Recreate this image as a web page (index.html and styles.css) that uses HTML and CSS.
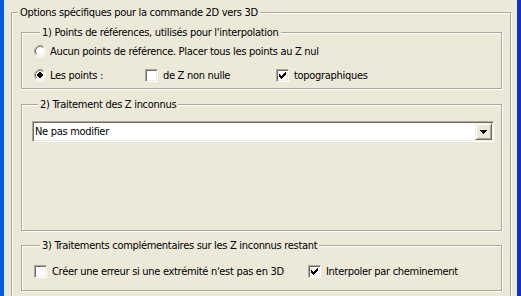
FILE: index.html
```html
<!DOCTYPE html>
<html lang="fr">
  <head>
    <meta charset="UTF-8" />
    <title>Options 2D vers 3D</title>
    <link rel="stylesheet" href="styles.css">
  </head>
  <body>
    <div class="window">
      <fieldset class="group outer">
        <legend>Options spécifiques pour la commande 2D vers 3D</legend>
        <div class="outer-body">

          <!-- 1) reference points -->
          <fieldset class="group refs">
            <legend>1) Points de références, utilisés pour l'interpolation</legend>
            <div class="row">
              <label class="opt">
                <svg class="radio" width="12" height="12" viewBox="0 0 12 12">
                  <circle cx="6" cy="6" r="5" fill="#fff" />
                  <path d="M2.11 9.89 A5.5 5.5 0 0 1 9.89 2.11" stroke="#aca899" fill="none" />
                  <path d="M9.89 2.11 A5.5 5.5 0 0 1 2.11 9.89" stroke="#fff" fill="none" />
                  <path d="M2.82 9.18 A4.5 4.5 0 0 1 9.18 2.82" stroke="#716f64" fill="none" />
                  <path d="M9.18 2.82 A4.5 4.5 0 0 1 2.82 9.18" stroke="#f1efe2" fill="none" />
                </svg>
                Aucun points de référence. Placer tous les points au Z nul
              </label>
            </div>
            <div class="row cols-refs">
              <label class="opt">
                <svg class="radio" width="12" height="12" viewBox="0 0 12 12">
                  <circle cx="6" cy="6" r="5" fill="#fff" />
                  <path d="M2.11 9.89 A5.5 5.5 0 0 1 9.89 2.11" stroke="#aca899" fill="none" />
                  <path d="M9.89 2.11 A5.5 5.5 0 0 1 2.11 9.89" stroke="#fff" fill="none" />
                  <path d="M2.82 9.18 A4.5 4.5 0 0 1 9.18 2.82" stroke="#716f64" fill="none" />
                  <path d="M9.18 2.82 A4.5 4.5 0 0 1 2.82 9.18" stroke="#f1efe2" fill="none" />
                  <rect x="4" y="4" width="4" height="4" fill="#000" />
                  <rect x="5" y="3" width="2" height="6" fill="#000" />
                  <rect x="3" y="5" width="6" height="2" fill="#000" />
                </svg>
                Les points :
              </label>
              <label class="opt opt-check">
                <span class="check"></span>
                de Z non nulle
              </label>
              <label class="opt opt-check">
                <span class="check">
                  <svg width="7" height="7" viewBox="0 0 7 7">
                    <path d="M0 2h1v1h1v1h1v-1h1v-1h1v-1h1v-1h1v3h-1v1h-1v1h-1v1h-1v1h-1v-1h-1v-1h-1z" fill="#000" />
                  </svg>
                </span>
                topographiques
              </label>
            </div>
          </fieldset>

          <!-- 2) unknown Z -->
          <fieldset class="group unknown">
            <legend>2) Traitement des Z inconnus</legend>
            <div class="combo">
              <span class="combo-text">Ne pas modifier</span>
              <span class="combo-btn">
                <svg width="7" height="4" viewBox="0 0 7 4">
                  <path d="M0 0h7v1h-1v1h-1v1h-1v1h-1v-1h-1v-1h-1v-1h-1z" fill="#000" />
                </svg>
              </span>
            </div>
          </fieldset>

          <!-- 3) remaining unknown Z -->
          <fieldset class="group remaining">
            <legend>3) Traitements complémentaires sur les Z inconnus restant</legend>
            <div class="row cols-remaining">
              <label class="opt opt-check">
                <span class="check"></span>
                Créer une erreur si une extrémité n'est pas en 3D
              </label>
              <label class="opt opt-check">
                <span class="check">
                  <svg width="7" height="7" viewBox="0 0 7 7">
                    <path d="M0 2h1v1h1v1h1v-1h1v-1h1v-1h1v-1h1v3h-1v1h-1v1h-1v1h-1v1h-1v-1h-1v-1h-1z" fill="#000" />
                  </svg>
                </span>
                Interpoler par cheminement
              </label>
            </div>
          </fieldset>

        </div>
      </fieldset>
    </div>
  </body>
</html>
```

FILE: styles.css
```css
/* Window */
body {
  margin: 0;
  font-family: "DejaVu Sans Condensed", "DejaVu Sans", sans-serif;
  font-size: 11px;
  letter-spacing: -0.3px;
  color: #000;
  background-color: #ece9d8;
}
.window {
  height: 296px;
  box-sizing: border-box;
  padding: 6px 0 0 7px;
  border-left: 4px solid #0a58e8;
  border-right: 4px solid #0831d9;
  background-color: #ece9d8;
  overflow: hidden;
}

/* Etched group boxes */
.group {
  margin: 0;
  padding: 0;
  border: 1px solid #aca899;
  box-shadow: 1px 1px 0 #fff, inset 1px 1px 0 #fff;
  min-width: 0;
}
.group legend {
  margin-left: 6px;
  padding: 0 2px;
  line-height: 13px;
  background-color: #ece9d8;
}
.outer {
  width: 500px;
  box-sizing: border-box;
}
.outer-body {
  display: flex;
  flex-direction: column;
  padding: 7px 8px 40px 9px;
}
.refs {
  padding: 0 0 1px 12px;
}
.unknown {
  margin-top: 9px;
  padding: 10px 7px 88px 10px;
}
.remaining {
  margin-top: 8px;
  padding: 7px 0 7px 12px;
}

/* Rows of options */
.row {
  display: flex;
  align-items: center;
  height: 24px;
}
.cols-refs {
  display: grid;
  grid-template-columns: 111px 131px auto;
}
.cols-remaining {
  display: grid;
  grid-template-columns: 274px auto;
}
.opt {
  display: flex;
  align-items: center;
  gap: 4px;
  white-space: nowrap;
}
.opt-check {
  gap: 5px;
}
.radio {
  flex: none;
}
.check {
  flex: none;
  display: flex;
  align-items: center;
  justify-content: center;
  width: 13px;
  height: 13px;
  box-sizing: border-box;
  border-top: 1px solid #aca899;
  border-left: 1px solid #aca899;
  border-bottom: 1px solid #fff;
  border-right: 1px solid #fff;
  box-shadow: inset 1px 1px 0 #716f64, inset -1px -1px 0 #f1efe2;
  background-color: #fff;
}
.check svg {
  display: block;
}

/* Combo box */
.combo {
  display: flex;
  height: 21px;
  box-sizing: border-box;
  border-top: 1px solid #aca899;
  border-left: 1px solid #aca899;
  border-bottom: 1px solid #fff;
  border-right: 1px solid #fff;
  box-shadow: inset 1px 1px 0 #716f64, inset -1px -1px 0 #f1efe2;
  background-color: #fff;
  padding: 1px;
}
.combo-text {
  flex: 1;
  padding-left: 1px;
  line-height: 17px;
}
.combo-btn {
  display: flex;
  align-items: center;
  justify-content: center;
  width: 17px;
  height: 17px;
  box-sizing: border-box;
  border-top: 1px solid #f1efe2;
  border-left: 1px solid #f1efe2;
  border-bottom: 1px solid #716f64;
  border-right: 1px solid #716f64;
  box-shadow: inset 1px 1px 0 #fff, inset -1px -1px 0 #aca899;
  background-color: #ece9d8;
}
.combo-btn svg {
  display: block;
}
```
